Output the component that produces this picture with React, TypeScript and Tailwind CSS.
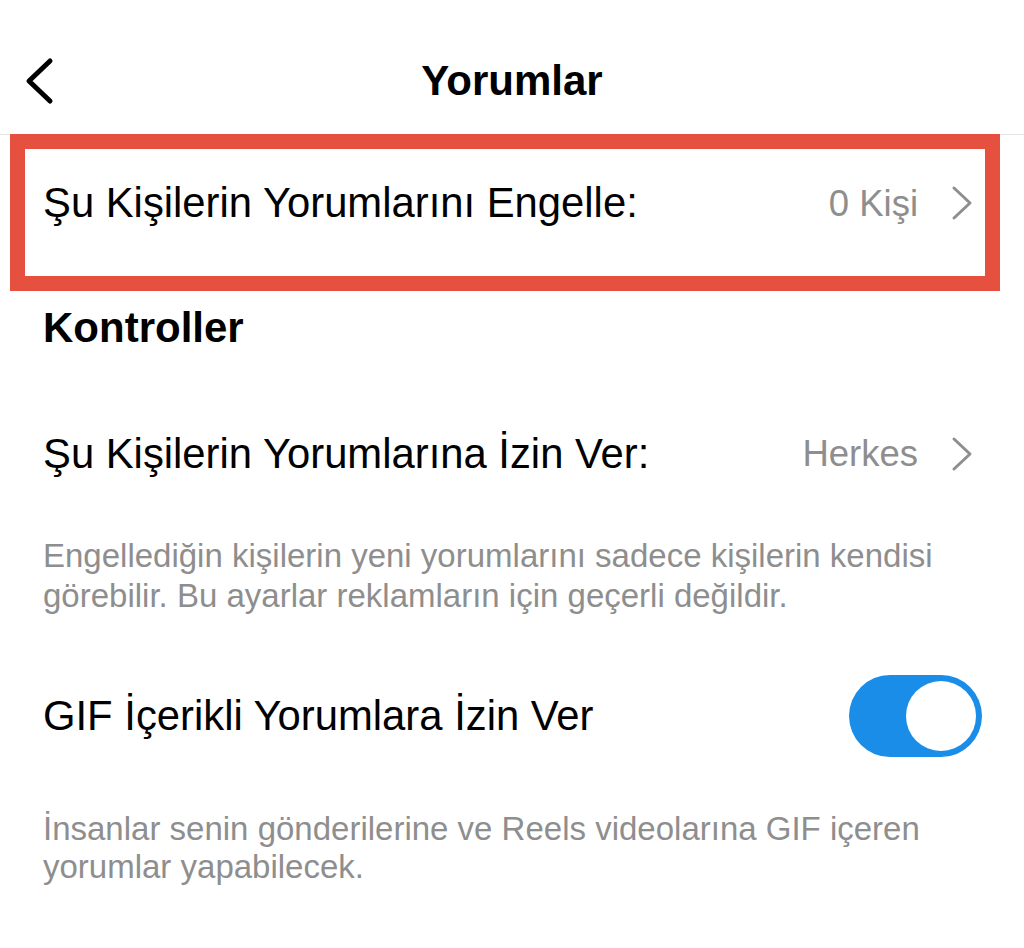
import React, { useState } from 'react';

const font = { fontFamily: '"Liberation Sans", Arial, sans-serif' };

const Chevron = () => (
  <svg width="22" height="36" viewBox="0 0 22 36" fill="none" className="shrink-0">
    <path d="M3 3 L19 18 L3 33" stroke="#8e8e8e" strokeWidth="3" strokeLinecap="round" strokeLinejoin="round" />
  </svg>
);

const NavRow: React.FC<{ label: string; value: string }> = ({ label, value }) => (
  <div className="flex items-center justify-between">
    <span className="text-[41.8px] text-black leading-[1.2]">{label}</span>
    <div className="flex items-center gap-[33px]">
      <span className="text-[36.5px] text-[#8e8e8e] leading-[1.2]">{value}</span>
      <Chevron />
    </div>
  </div>
);

export default function App() {
  const [gifOn, setGifOn] = useState(true);

  return (
    <div className="w-full h-[948px] bg-white overflow-hidden" style={font}>
      {/* header */}
      <div className="h-[135px] border-b border-[#e6e6e6] grid grid-cols-[1fr_auto_1fr] items-start pt-[57px]">
        <button className="ml-[24px] w-[32px]">
          <svg width="30" height="48" viewBox="0 0 30 48" fill="none">
            <path d="M26 4 L5 24 L26 44" stroke="#000" strokeWidth="5" strokeLinecap="round" strokeLinejoin="round" />
          </svg>
        </button>
        <h1 className="text-[42px] font-bold text-black leading-[48px]">Yorumlar</h1>
        <div />
      </div>

      {/* highlighted row */}
      <div className="ml-[10px] mr-[24px] -mt-px h-[157px] border-[15px] border-[#e5503f] flex flex-col justify-center pl-[18px] pr-[12px] pb-[18px]">
        <NavRow label="Şu Kişilerin Yorumlarını Engelle:" value="0 Kişi" />
      </div>

      <div className="px-[43px] pr-[51px]">
        <div className="h-[72px] flex items-center">
          <h2 className="text-[42px] font-bold text-black">Kontroller</h2>
        </div>

        <div className="mt-[41px] h-[100px] flex flex-col justify-center">
          <NavRow label="Şu Kişilerin Yorumlarına İzin Ver:" value="Herkes" />
        </div>

        <p className="mt-[32px] text-[33px] leading-[40px] text-[#8e8e8e]">
          Engellediğin kişilerin yeni yorumlarını sadece kişilerin kendisi görebilir. Bu ayarlar reklamların için geçerli değildir.
        </p>

        <div className="mt-[50px] h-[100px] flex items-center justify-between -mr-[9px]">
          <span className="text-[41.8px] text-black">GIF İçerikli Yorumlara İzin Ver</span>
          <button
            onClick={() => setGifOn(!gifOn)}
            className={`w-[133px] h-[82px] rounded-full p-[6px] flex items-center ${gifOn ? 'bg-[#1a8de8] justify-end' : 'bg-[#e5e5ea] justify-start'}`}
          >
            <span className="block w-[70px] h-[70px] rounded-full bg-white" />
          </button>
        </div>

        <p className="mt-[44px] text-[33px] leading-[38px] text-[#8e8e8e]">
          İnsanlar senin gönderilerine ve Reels videolarına GIF içeren yorumlar yapabilecek.
        </p>
      </div>
    </div>
  );
}
